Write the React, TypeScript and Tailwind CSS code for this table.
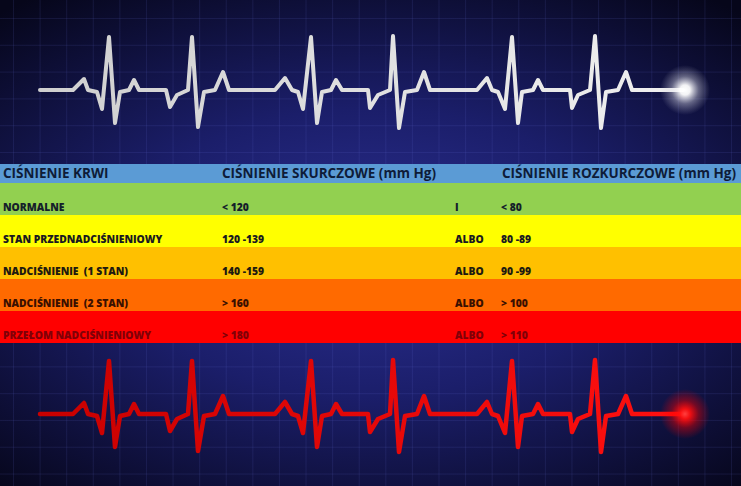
import React from "react";

const ECG =
  "M40,90 L73,90 L84,79 L88,90 L97,92 L102,109 L109,37 L115,123 L120,92 L129,90 L134,80 L139,90 L166,90 L170,107 L177,95 L188,90 L192,37 L198,127 L204,92 L215,90 L223,72 L229,90 L275,90 L285,78 L292,90 L298,92 L303,109 L311,37 L317,123 L322,92 L331,90 L336,80 L342,90 L368,90 L370,108 L378,95 L390,90 L393,36 L399,128 L405,92 L417,90 L424,72 L430,90 L477,90 L487,78 L492,90 L498,92 L505,109 L512,37 L518,123 L522,92 L533,90 L538,80 L543,90 L570,90 L572,108 L578,95 L590,90 L595,36 L601,128 L606,92 L618,90 L626,72 L632,90 L683,90";

function Wave({ red }: { red?: boolean }) {
  const id = red ? "r" : "w";
  return (
    <svg
      width="741"
      height={red ? 143 : 164}
      viewBox={red ? "0 19 741 143" : "0 0 741 164"}
      className="block"
    >
      <defs>
        <linearGradient id={`line-${id}`} x1="0" x2="1" y1="0" y2="0">
          <stop offset="0" stopColor={red ? "#c80000" : "#cfcfcf"} />
          <stop offset="1" stopColor={red ? "#ff1010" : "#f0f0f0"} />
        </linearGradient>
        <radialGradient id={`glow-${id}`} cx="0.5" cy="0.5" r="0.5">
          <stop offset="0" stopColor={red ? "#ff4040" : "#ffffff"} stopOpacity="1" />
          <stop offset="0.2" stopColor={red ? "#ff1010" : "#ffffff"} stopOpacity="0.95" />
          <stop offset="0.55" stopColor={red ? "#ff0000" : "#e0e0ec"} stopOpacity="0.4" />
          <stop offset="1" stopColor={red ? "#ff0000" : "#c0c0d0"} stopOpacity="0" />
        </radialGradient>
      </defs>
      <path
        d={ECG}
        fill="none"
        stroke={`url(#line-${id})`}
        strokeWidth={red ? 4.5 : 4}
        strokeLinejoin="round"
        strokeLinecap="round"
      />
      <circle cx="685" cy="90" r="25" fill={`url(#glow-${id})`} />
    </svg>
  );
}

const rows = [
  { bg: "bg-[#92d050]", tc: "text-[#15202a]", a: "NORMALNE", b: "< 120", c: "I", d: "< 80" },
  { bg: "bg-[#ffff00]", tc: "text-[#1a1a20]", a: "STAN PRZEDNADCIŚNIENIOWY", b: "120 -139", c: "ALBO", d: "80 -89" },
  { bg: "bg-[#ffc000]", tc: "text-[#201a10]", a: "NADCIŚNIENIE  (1 STAN)", b: "140 -159", c: "ALBO", d: "90 -99" },
  { bg: "bg-[#ff6a00]", tc: "text-[#3a1000]", a: "NADCIŚNIENIE  (2 STAN)", b: "> 160", c: "ALBO", d: "> 100" },
  { bg: "bg-[#ff0000]", tc: "text-[#800008]", a: "PRZEŁOM NADCIŚNIENIOWY", b: "> 180", c: "ALBO", d: "> 110" },
];

export default function App() {
  return (
    <div
      className="w-[741px] h-[486px] overflow-hidden flex flex-col font-['Open_Sans',sans-serif] bg-[linear-gradient(rgba(110,120,230,0.12)_1px,transparent_1px),linear-gradient(90deg,rgba(110,120,230,0.12)_1px,transparent_1px),radial-gradient(ellipse_560px_320px_at_50%_52%,#2c3094_0%,#1b1e6a_45%,#06061a_100%)] bg-size-[26.6px_26.8px,26.6px_26.8px,100%_100%] bg-position-[13px_18px,13px_18px,0_0]"
    >
      <div className="h-[164px] shrink-0">
        <Wave />
      </div>
      <div className="shrink-0">
        <div className="h-[19px] bg-[#5b9bd5] text-[#0e1c38] text-[13.5px] font-bold leading-none grid grid-cols-[219px_280px_1fr] pl-[3px] items-end pb-[3px] whitespace-pre">
          <div>CIŚNIENIE KRWI</div>
          <div>CIŚNIENIE SKURCZOWE (mm Hg)</div>
          <div>CIŚNIENIE ROZKURCZOWE (mm Hg)</div>
        </div>
        {rows.map((r, i) => (
          <div
            key={i}
            className={`h-[32px] ${r.bg} ${r.tc} text-[10.3px] font-extrabold leading-none grid grid-cols-[219px_233px_46px_1fr] pl-[3px] items-end pb-[3px] whitespace-pre`}
          >
            <div>{r.a}</div>
            <div>{r.b}</div>
            <div>{r.c}</div>
            <div>{r.d}</div>
          </div>
        ))}
      </div>
      <div className="h-[143px] shrink-0">
        <Wave red />
      </div>
    </div>
  );
}
